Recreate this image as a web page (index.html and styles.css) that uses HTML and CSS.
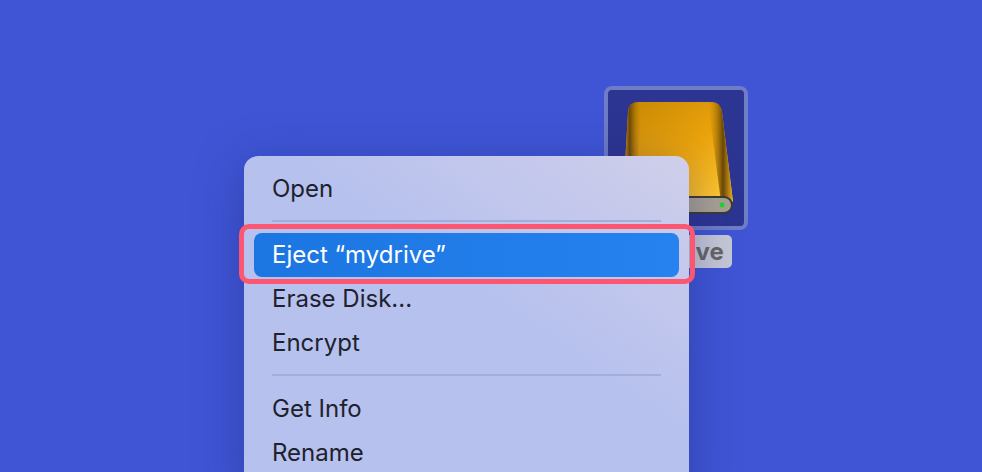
FILE: index.html
```html
<!DOCTYPE html>
<html lang="en">
<head>
    <meta charset="UTF-8">
    <meta name="viewport" content="width=device-width, initial-scale=1.0">
    <title>Eject mydrive</title>

    <link rel="stylesheet" href="styles.css">
</head>
<body>

    <!-- Desktop icon -->
    <div class="drive">
        <div class="drive-tile">
            <svg class="drive-art" width="136" height="136" viewBox="0 0 136 136">
                <defs>
                    <linearGradient id="body-fill" x1="0.1" y1="0" x2="0.75" y2="1">
                        <stop offset="0" stop-color="#c98a05"/>
                        <stop offset="0.55" stop-color="#eda50c"/>
                        <stop offset="1" stop-color="#ffc62e"/>
                    </linearGradient>
                    <linearGradient id="edge-left" x1="0" y1="0" x2="1" y2="0">
                        <stop offset="0" stop-color="#e8a514"/>
                        <stop offset="0.35" stop-color="#6e4a05"/>
                        <stop offset="1" stop-color="#c98a05" stop-opacity="0"/>
                    </linearGradient>
                    <linearGradient id="edge-right" x1="0" y1="0" x2="1" y2="0">
                        <stop offset="0" stop-color="#c98a05" stop-opacity="0"/>
                        <stop offset="0.6" stop-color="#6b4805"/>
                        <stop offset="1" stop-color="#eeb020"/>
                    </linearGradient>
                </defs>
                <path d="M30 12H104Q112 12 114 22L125 112H15L20 22Q21 12 30 12Z" fill="url(#body-fill)"/>
                <path d="M30 12H34L27 112H15L20 22Q21 12 30 12Z" fill="url(#edge-left)"/>
                <path d="M100 12H104Q112 12 114 22L125 112H113Z" fill="url(#edge-right)"/>
                <rect x="15" y="106" width="110" height="18" rx="9" fill="#3c3a36"/>
                <rect x="17" y="108" width="106" height="14" rx="7" fill="#a8a292"/>
                <circle cx="114" cy="115" r="2.5" fill="#1fd62a"/>
            </svg>
        </div>
        <div class="drive-label">mydrive</div>
    </div>

    <!-- Context menu -->
    <div class="menu">
        <div class="menu-item">Open</div>
        <div class="menu-sep"></div>
        <div class="menu-item active">Eject “mydrive”</div>
        <div class="menu-item">Erase Disk...</div>
        <div class="menu-item">Encrypt</div>
        <div class="menu-sep"></div>
        <div class="menu-item">Get Info</div>
        <div class="menu-item">Rename</div>
    </div>

    <!-- Highlight drawn around the Eject row -->
    <div class="callout"></div>

</body>
</html>
```

FILE: styles.css
```css
body {
    background-color: #3f55d5;
    font-family: 'Inter', 'Liberation Sans', sans-serif;
    margin: 0;
    height: 472px;
    overflow: hidden;
    position: relative;
}

/* Desktop icon */
.drive {
    position: absolute;
    left: 604px;
    top: 86px;
    width: 144px;
    display: flex;
    flex-direction: column;
    align-items: center;
    gap: 5px;
}

.drive-tile {
    width: 144px;
    height: 144px;
    box-sizing: border-box;
    background-color: #2c3591;
    border: 4px solid #6f7cc6;
    border-radius: 8px;
}

.drive-art {
    display: block;
}

.drive-label {
    background-color: #c5c8d6;
    color: #666;
    font-size: 24px;
    font-weight: 700;
    line-height: 33px;
    padding: 0 8px;
    border-radius: 5px;
}

/* Context menu */
.menu {
    position: absolute;
    left: 244px;
    top: 156px;
    width: 445px;
    height: 340px;
    box-sizing: border-box;
    padding: 11px 10px;
    background: linear-gradient(215deg, #cfcfe9 0, #c6c9ec 90px, #b6c1ee 240px);
    border-radius: 14px 14px 0 0;
    box-shadow: 0 10px 50px rgba(30, 35, 110, 0.4);
}

.menu-item {
    height: 44px;
    line-height: 44px;
    padding: 0 18px;
    color: #20212c;
    font-size: 24px;
    border-radius: 8px;
}

.menu-item.active {
    background: linear-gradient(90deg, #1b76e2, #2682ee);
    color: white;
}

.menu-sep {
    height: 2px;
    margin: 9px 18px 11px;
    background-color: #a3aedb;
}

/* Callout */
.callout {
    position: absolute;
    left: 239px;
    top: 224px;
    width: 456px;
    height: 60px;
    box-sizing: border-box;
    border: 5px solid #fd5670;
    border-radius: 10px;
}
```
